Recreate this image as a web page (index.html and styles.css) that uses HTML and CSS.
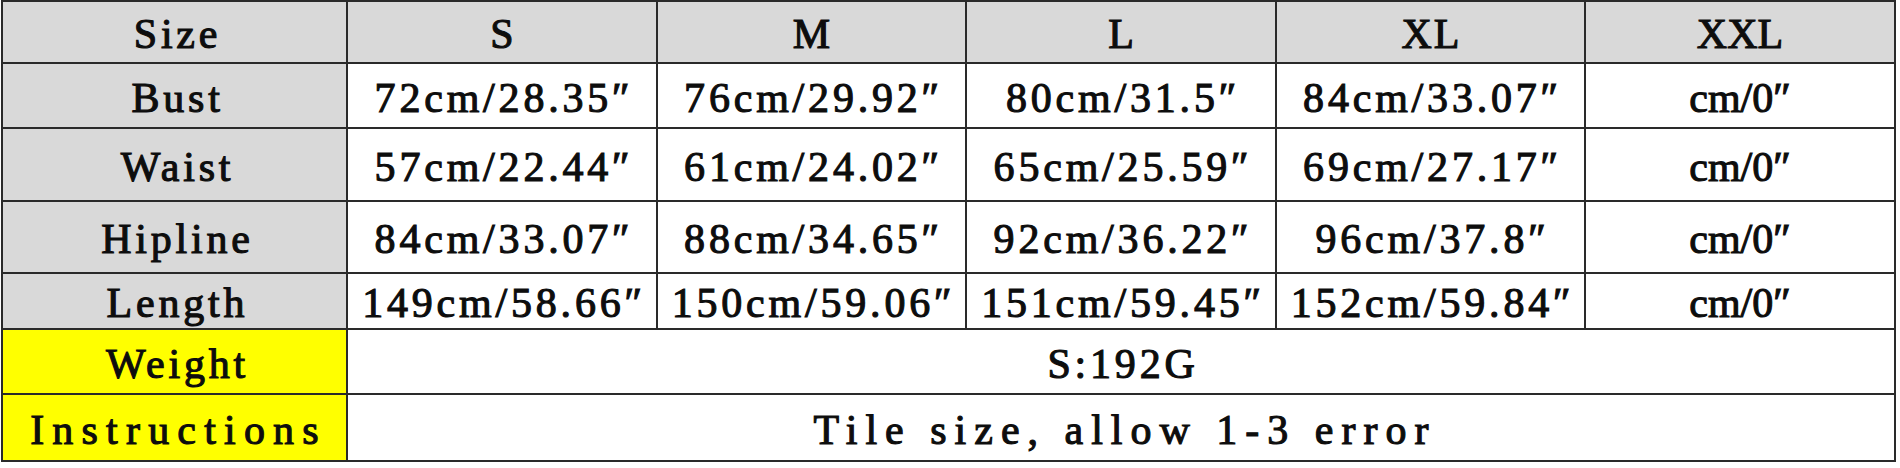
FILE: index.html
```html
<!DOCTYPE html>
<html>
<head>
<meta charset="utf-8">
<link rel="stylesheet" href="styles.css">
</head>
<body>
<table class="size-chart">
  <colgroup>
    <col class="c-label"><col class="c-s"><col class="c-m"><col class="c-l"><col class="c-xl"><col class="c-xxl">
  </colgroup>
  <tr class="r-head">
    <th class="label">Size</th><th class="single">S</th><th class="single">M</th><th class="single">L</th><th class="single">XL</th><th class="serif">XXL</th>
  </tr>
  <tr class="r-bust">
    <th class="label">Bust</th><td>72cm/28.35″</td><td>76cm/29.92″</td><td>80cm/31.5″</td><td>84cm/33.07″</td><td class="serif">cm/0″</td>
  </tr>
  <tr class="r-waist">
    <th class="label">Waist</th><td>57cm/22.44″</td><td>61cm/24.02″</td><td>65cm/25.59″</td><td>69cm/27.17″</td><td class="serif">cm/0″</td>
  </tr>
  <tr class="r-hip">
    <th class="label">Hipline</th><td>84cm/33.07″</td><td>88cm/34.65″</td><td>92cm/36.22″</td><td>96cm/37.8″</td><td class="serif">cm/0″</td>
  </tr>
  <tr class="r-length">
    <th class="label">Length</th><td>149cm/58.66″</td><td>150cm/59.06″</td><td>151cm/59.45″</td><td>152cm/59.84″</td><td class="serif">cm/0″</td>
  </tr>
  <tr class="r-weight">
    <th class="label hl">Weight</th><td colspan="5" class="merged">S:192G</td>
  </tr>
  <tr class="r-instr">
    <th class="label hl spaced">Instructions</th><td colspan="5" class="merged wide">Tile size, allow 1-3 error</td>
  </tr>
</table>
</body>
</html>
```
FILE: styles.css
```css
html, body {
  margin: 0;
  padding: 0;
  background: #ffffff;
}
.size-chart {
  margin-left: 1px;
  border-collapse: collapse;
  table-layout: fixed;
  width: 1894px;
  font-family: "Liberation Serif", "DejaVu Serif", serif;
  font-size: 42px;
  font-weight: normal;
  color: #0d0d0d;
}
.c-label { width: 345px; }
.c-s { width: 310px; }
.c-m { width: 309px; }
.c-l { width: 310px; }
.c-xl { width: 309px; }
.c-xxl { width: 310px; }
.size-chart th,
.size-chart td {
  border: 2px solid #2a2a2a;
  padding: 4px 0 0 4px;
  text-align: center;
  vertical-align: middle;
  font-weight: normal;
  white-space: nowrap;
  overflow: hidden;
  line-height: 1;
  letter-spacing: 3.8px;
  -webkit-text-stroke: 1.1px #0d0d0d;
}
.r-head th { background: #d9d9d9; }
.label {
  background: #d9d9d9;
  letter-spacing: 6px;
}
.size-chart .label { padding-left: 6px; }
.label.hl { background: #ffff00; }
.size-chart .spaced {
  letter-spacing: 8.2px;
  padding-left: 8px;
}
.size-chart .single { letter-spacing: 2px; padding-left: 2px; }
.size-chart .serif {
  font-size: 42px;
  letter-spacing: 0;
  padding-left: 0;
}
.size-chart .wide {
  letter-spacing: 8px;
  padding-left: 8px;
}
.merged { letter-spacing: 4px; }
.r-head { height: 62px; }
.r-bust { height: 65px; }
.r-waist { height: 73px; }
.r-hip { height: 72px; }
.r-length { height: 56px; }
.r-weight { height: 65px; }
.r-instr { height: 67px; }
```
